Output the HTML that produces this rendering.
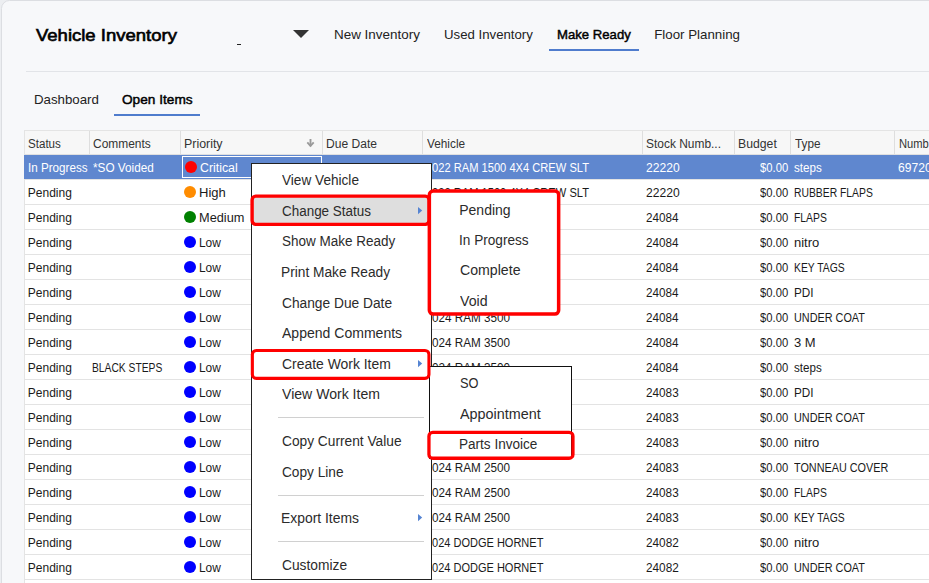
<!DOCTYPE html>
<html><head><meta charset="utf-8">
<style>
html,body{margin:0;padding:0;}
body{width:929px;height:583px;overflow:hidden;position:relative;background:#eceef1;font-family:"Liberation Sans",sans-serif;}
.t{position:absolute;white-space:nowrap;line-height:20px;}
.card{position:absolute;left:1px;top:0px;width:1000px;height:700px;border:1px solid #dcdee2;border-radius:8.5px;background:#f7f8fa;box-sizing:border-box;}
.ln{position:absolute;}
</style></head><body>
<div class="card"></div>

<div class="t" style="left:36.41px;top:24.97px;font-size:17.4px;color:#000;transform:scaleX(1.0637);transform-origin:0 0;-webkit-text-stroke:0.65px #000;">Vehicle Inventory</div>
<div class="ln" style="left:237px;top:44px;width:4px;height:1px;background:#222"></div>
<svg style="position:absolute;left:293px;top:30px" width="16" height="8"><path d="M0 0H16L8 8Z" fill="#333"/></svg>
<div class="t" style="left:334.49px;top:24.59px;font-size:13.3px;color:#222;transform:scaleX(1.0109);transform-origin:0 0;">New Inventory</div>
<div class="t" style="left:444.18px;top:24.59px;font-size:13.3px;color:#222;transform:scaleX(0.9935);transform-origin:0 0;">Used Inventory</div>
<div class="t" style="left:556.72px;top:24.59px;font-size:13.3px;color:#000;transform:scaleX(0.9885);transform-origin:0 0;-webkit-text-stroke:0.45px #000;">Make Ready</div>
<div class="t" style="left:654.20px;top:24.59px;font-size:13.3px;color:#222;">Floor Planning</div>
<div class="ln" style="left:549px;top:49px;width:90px;height:2px;background:#4f7ccd"></div>
<div class="ln" style="left:26px;top:71px;width:903px;height:1px;background:#e2e4e8"></div>
<div class="t" style="left:33.50px;top:90.46px;font-size:13.1px;color:#222;transform:scaleX(1.0135);transform-origin:0 0;">Dashboard</div>
<div class="t" style="left:121.95px;top:89.69px;font-size:13.3px;color:#000;transform:scaleX(1.0271);transform-origin:0 0;-webkit-text-stroke:0.45px #000;">Open Items</div>
<div class="ln" style="left:114px;top:114px;width:86px;height:2px;background:#4f7ccd"></div>
<div class="ln" style="left:24px;top:130px;width:905px;height:24px;background:#f7f7f7;border-top:1px solid #e4e4e4;box-sizing:border-box"></div>
<div class="ln" style="left:24px;top:154px;width:905px;height:1px;background:#e0e0e0"></div>
<div class="ln" style="left:24px;top:155px;width:905px;height:428px;background:#ffffff"></div>
<div class="ln" style="left:24px;top:130px;width:1px;height:453px;background:#e4e4e4"></div>
<div class="ln" style="left:89px;top:131px;width:1px;height:23px;background:#dedede"></div>
<div class="ln" style="left:180px;top:131px;width:1px;height:23px;background:#dedede"></div>
<div class="ln" style="left:322px;top:131px;width:1px;height:23px;background:#dedede"></div>
<div class="ln" style="left:422px;top:131px;width:1px;height:23px;background:#dedede"></div>
<div class="ln" style="left:642px;top:131px;width:1px;height:23px;background:#dedede"></div>
<div class="ln" style="left:734px;top:131px;width:1px;height:23px;background:#dedede"></div>
<div class="ln" style="left:790px;top:131px;width:1px;height:23px;background:#dedede"></div>
<div class="ln" style="left:894px;top:131px;width:1px;height:23px;background:#dedede"></div>
<div class="t" style="left:28.38px;top:133.54px;font-size:12px;color:#333;transform:scaleX(0.9649);transform-origin:0 0;">Status</div>
<div class="t" style="left:93.40px;top:133.54px;font-size:12px;color:#333;transform:scaleX(0.9965);transform-origin:0 0;">Comments</div>
<div class="t" style="left:184.18px;top:133.54px;font-size:12px;color:#333;transform:scaleX(1.0322);transform-origin:0 0;">Priority</div>
<div class="t" style="left:325.91px;top:133.54px;font-size:12px;color:#333;transform:scaleX(1.0047);transform-origin:0 0;">Due Date</div>
<div class="t" style="left:426.74px;top:133.54px;font-size:12px;color:#333;transform:scaleX(0.9843);transform-origin:0 0;">Vehicle</div>
<div class="t" style="left:646.46px;top:133.54px;font-size:12px;color:#333;transform:scaleX(0.9954);transform-origin:0 0;">Stock Numb...</div>
<div class="t" style="left:737.79px;top:133.54px;font-size:12px;color:#333;transform:scaleX(1.0200);transform-origin:0 0;">Budget</div>
<div class="t" style="left:794.54px;top:133.54px;font-size:12px;color:#333;transform:scaleX(0.9790);transform-origin:0 0;">Type</div>
<div class="t" style="left:898.68px;top:133.54px;font-size:12px;color:#333;transform:scaleX(0.9300);transform-origin:0 0;">Numb</div>
<svg style="position:absolute;left:306px;top:138px" width="9" height="10"><path d="M4.5 1V8.2" stroke="#9a9a9a" stroke-width="1.9" fill="none"/><path d="M1.3 4.4L4.5 7.9L7.7 4.4" stroke="#9a9a9a" stroke-width="1.8" fill="none" stroke-linejoin="miter"/></svg>
<div class="ln" style="left:24px;top:155px;width:905px;height:24px;background:#5f87cf"></div>
<div class="ln" style="left:182px;top:156px;width:140px;height:22px;border:1px solid #fff;box-sizing:border-box"></div>
<div class="ln" style="left:25px;top:179px;width:904px;height:1px;background:#e3e3e3"></div>
<div class="t" style="left:27.72px;top:157.84px;font-size:12px;color:#fff;transform:scaleX(0.9712);transform-origin:0 0;">In Progress</div>
<div class="t" style="left:93.09px;top:157.84px;font-size:12px;color:#fff;transform:scaleX(0.9807);transform-origin:0 0;">*SO Voided</div>
<div class="ln" style="left:185px;top:161px;width:12px;height:12px;border-radius:50%;background:#ff0000"></div>
<div class="t" style="left:200.18px;top:157.84px;font-size:12px;color:#fff;transform:scaleX(1.0270);transform-origin:0 0;">Critical</div>
<div class="t" style="left:432.25px;top:157.84px;font-size:12px;color:#fff;transform:scaleX(0.9280);transform-origin:0 0;">022 RAM 1500 4X4 CREW SLT</div>
<div class="t" style="left:645.89px;top:157.84px;font-size:12px;color:#fff;transform:scaleX(1.0090);transform-origin:0 0;">22220</div>
<div class="t" style="left:759.99px;top:157.84px;font-size:12px;color:#fff;transform:scaleX(0.9369);transform-origin:0 0;">$0.00</div>
<div class="t" style="left:794.28px;top:157.84px;font-size:12px;color:#fff;transform:scaleX(0.9667);transform-origin:0 0;">steps</div>
<div class="t" style="left:897.79px;top:157.84px;font-size:12px;color:#fff;transform:scaleX(1.0090);transform-origin:0 0;">69720</div>
<div class="ln" style="left:25px;top:204px;width:904px;height:1px;background:#e3e3e3"></div>
<div class="t" style="left:27.81px;top:182.84px;font-size:12px;color:#1a1a1a;">Pending</div>
<div class="ln" style="left:184px;top:186px;width:12px;height:12px;border-radius:50%;background:#ff8c00"></div>
<div class="t" style="left:199.32px;top:182.84px;font-size:12px;color:#1a1a1a;transform:scaleX(1.0864);transform-origin:0 0;">High</div>
<div class="t" style="left:432.25px;top:182.84px;font-size:12px;color:#1a1a1a;transform:scaleX(0.9280);transform-origin:0 0;">022 RAM 1500 4X4 CREW SLT</div>
<div class="t" style="left:645.89px;top:182.84px;font-size:12px;color:#1a1a1a;transform:scaleX(1.0090);transform-origin:0 0;">22220</div>
<div class="t" style="left:759.99px;top:182.84px;font-size:12px;color:#1a1a1a;transform:scaleX(0.9369);transform-origin:0 0;">$0.00</div>
<div class="t" style="left:793.75px;top:182.84px;font-size:12px;color:#1a1a1a;transform:scaleX(0.8625);transform-origin:0 0;">RUBBER FLAPS</div>
<div class="ln" style="left:25px;top:229px;width:904px;height:1px;background:#e3e3e3"></div>
<div class="t" style="left:27.81px;top:207.84px;font-size:12px;color:#1a1a1a;">Pending</div>
<div class="ln" style="left:184px;top:211px;width:12px;height:12px;border-radius:50%;background:#008000"></div>
<div class="t" style="left:199.35px;top:207.84px;font-size:12px;color:#1a1a1a;transform:scaleX(1.0638);transform-origin:0 0;">Medium</div>
<div class="t" style="left:432.23px;top:207.84px;font-size:12px;color:#1a1a1a;transform:scaleX(0.9746);transform-origin:0 0;">024 RAM 3500</div>
<div class="t" style="left:645.92px;top:207.84px;font-size:12px;color:#1a1a1a;transform:scaleX(0.9744);transform-origin:0 0;">24084</div>
<div class="t" style="left:759.99px;top:207.84px;font-size:12px;color:#1a1a1a;transform:scaleX(0.9369);transform-origin:0 0;">$0.00</div>
<div class="t" style="left:793.75px;top:207.84px;font-size:12px;color:#1a1a1a;transform:scaleX(0.8635);transform-origin:0 0;">FLAPS</div>
<div class="ln" style="left:25px;top:254px;width:904px;height:1px;background:#e3e3e3"></div>
<div class="t" style="left:27.81px;top:232.84px;font-size:12px;color:#1a1a1a;">Pending</div>
<div class="ln" style="left:184px;top:236px;width:12px;height:12px;border-radius:50%;background:#0000ff"></div>
<div class="t" style="left:199.42px;top:232.84px;font-size:12px;color:#1a1a1a;transform:scaleX(0.9924);transform-origin:0 0;">Low</div>
<div class="t" style="left:432.23px;top:232.84px;font-size:12px;color:#1a1a1a;transform:scaleX(0.9746);transform-origin:0 0;">024 RAM 3500</div>
<div class="t" style="left:645.92px;top:232.84px;font-size:12px;color:#1a1a1a;transform:scaleX(0.9744);transform-origin:0 0;">24084</div>
<div class="t" style="left:759.99px;top:232.84px;font-size:12px;color:#1a1a1a;transform:scaleX(0.9369);transform-origin:0 0;">$0.00</div>
<div class="t" style="left:793.72px;top:232.84px;font-size:12px;color:#1a1a1a;transform:scaleX(1.0839);transform-origin:0 0;">nitro</div>
<div class="ln" style="left:25px;top:279px;width:904px;height:1px;background:#e3e3e3"></div>
<div class="t" style="left:27.81px;top:257.84px;font-size:12px;color:#1a1a1a;">Pending</div>
<div class="ln" style="left:184px;top:261px;width:12px;height:12px;border-radius:50%;background:#0000ff"></div>
<div class="t" style="left:199.42px;top:257.84px;font-size:12px;color:#1a1a1a;transform:scaleX(0.9924);transform-origin:0 0;">Low</div>
<div class="t" style="left:432.23px;top:257.84px;font-size:12px;color:#1a1a1a;transform:scaleX(0.9746);transform-origin:0 0;">024 RAM 3500</div>
<div class="t" style="left:645.92px;top:257.84px;font-size:12px;color:#1a1a1a;transform:scaleX(0.9744);transform-origin:0 0;">24084</div>
<div class="t" style="left:759.99px;top:257.84px;font-size:12px;color:#1a1a1a;transform:scaleX(0.9369);transform-origin:0 0;">$0.00</div>
<div class="t" style="left:793.74px;top:257.84px;font-size:12px;color:#1a1a1a;transform:scaleX(0.8639);transform-origin:0 0;">KEY TAGS</div>
<div class="ln" style="left:25px;top:304px;width:904px;height:1px;background:#e3e3e3"></div>
<div class="t" style="left:27.81px;top:282.84px;font-size:12px;color:#1a1a1a;">Pending</div>
<div class="ln" style="left:184px;top:286px;width:12px;height:12px;border-radius:50%;background:#0000ff"></div>
<div class="t" style="left:199.42px;top:282.84px;font-size:12px;color:#1a1a1a;transform:scaleX(0.9924);transform-origin:0 0;">Low</div>
<div class="t" style="left:432.23px;top:282.84px;font-size:12px;color:#1a1a1a;transform:scaleX(0.9746);transform-origin:0 0;">024 RAM 3500</div>
<div class="t" style="left:645.92px;top:282.84px;font-size:12px;color:#1a1a1a;transform:scaleX(0.9744);transform-origin:0 0;">24084</div>
<div class="t" style="left:759.99px;top:282.84px;font-size:12px;color:#1a1a1a;transform:scaleX(0.9369);transform-origin:0 0;">$0.00</div>
<div class="t" style="left:793.63px;top:282.84px;font-size:12px;color:#1a1a1a;transform:scaleX(0.9771);transform-origin:0 0;">PDI</div>
<div class="ln" style="left:25px;top:329px;width:904px;height:1px;background:#e3e3e3"></div>
<div class="t" style="left:27.81px;top:307.84px;font-size:12px;color:#1a1a1a;">Pending</div>
<div class="ln" style="left:184px;top:311px;width:12px;height:12px;border-radius:50%;background:#0000ff"></div>
<div class="t" style="left:199.42px;top:307.84px;font-size:12px;color:#1a1a1a;transform:scaleX(0.9924);transform-origin:0 0;">Low</div>
<div class="t" style="left:432.23px;top:307.84px;font-size:12px;color:#1a1a1a;transform:scaleX(0.9746);transform-origin:0 0;">024 RAM 3500</div>
<div class="t" style="left:645.92px;top:307.84px;font-size:12px;color:#1a1a1a;transform:scaleX(0.9744);transform-origin:0 0;">24084</div>
<div class="t" style="left:759.99px;top:307.84px;font-size:12px;color:#1a1a1a;transform:scaleX(0.9369);transform-origin:0 0;">$0.00</div>
<div class="t" style="left:793.76px;top:307.84px;font-size:12px;color:#1a1a1a;transform:scaleX(0.9036);transform-origin:0 0;">UNDER COAT</div>
<div class="ln" style="left:25px;top:354px;width:904px;height:1px;background:#e3e3e3"></div>
<div class="t" style="left:27.81px;top:332.84px;font-size:12px;color:#1a1a1a;">Pending</div>
<div class="ln" style="left:184px;top:336px;width:12px;height:12px;border-radius:50%;background:#0000ff"></div>
<div class="t" style="left:199.42px;top:332.84px;font-size:12px;color:#1a1a1a;transform:scaleX(0.9924);transform-origin:0 0;">Low</div>
<div class="t" style="left:432.23px;top:332.84px;font-size:12px;color:#1a1a1a;transform:scaleX(0.9746);transform-origin:0 0;">024 RAM 3500</div>
<div class="t" style="left:645.92px;top:332.84px;font-size:12px;color:#1a1a1a;transform:scaleX(0.9744);transform-origin:0 0;">24084</div>
<div class="t" style="left:759.99px;top:332.84px;font-size:12px;color:#1a1a1a;transform:scaleX(0.9369);transform-origin:0 0;">$0.00</div>
<div class="t" style="left:794.11px;top:332.84px;font-size:12px;color:#1a1a1a;transform:scaleX(1.0824);transform-origin:0 0;">3 M</div>
<div class="ln" style="left:25px;top:379px;width:904px;height:1px;background:#e3e3e3"></div>
<div class="t" style="left:27.81px;top:357.84px;font-size:12px;color:#1a1a1a;">Pending</div>
<div class="t" style="left:92.45px;top:357.84px;font-size:12px;color:#1a1a1a;transform:scaleX(0.8569);transform-origin:0 0;">BLACK STEPS</div>
<div class="ln" style="left:184px;top:361px;width:12px;height:12px;border-radius:50%;background:#0000ff"></div>
<div class="t" style="left:199.42px;top:357.84px;font-size:12px;color:#1a1a1a;transform:scaleX(0.9924);transform-origin:0 0;">Low</div>
<div class="t" style="left:432.23px;top:357.84px;font-size:12px;color:#1a1a1a;transform:scaleX(0.9746);transform-origin:0 0;">024 RAM 3500</div>
<div class="t" style="left:645.92px;top:357.84px;font-size:12px;color:#1a1a1a;transform:scaleX(0.9744);transform-origin:0 0;">24084</div>
<div class="t" style="left:759.99px;top:357.84px;font-size:12px;color:#1a1a1a;transform:scaleX(0.9369);transform-origin:0 0;">$0.00</div>
<div class="t" style="left:794.28px;top:357.84px;font-size:12px;color:#1a1a1a;transform:scaleX(0.9667);transform-origin:0 0;">steps</div>
<div class="ln" style="left:25px;top:404px;width:904px;height:1px;background:#e3e3e3"></div>
<div class="t" style="left:27.81px;top:382.84px;font-size:12px;color:#1a1a1a;">Pending</div>
<div class="ln" style="left:184px;top:386px;width:12px;height:12px;border-radius:50%;background:#0000ff"></div>
<div class="t" style="left:199.42px;top:382.84px;font-size:12px;color:#1a1a1a;transform:scaleX(0.9924);transform-origin:0 0;">Low</div>
<div class="t" style="left:432.23px;top:382.84px;font-size:12px;color:#1a1a1a;transform:scaleX(0.9746);transform-origin:0 0;">024 RAM 2500</div>
<div class="t" style="left:645.91px;top:382.84px;font-size:12px;color:#1a1a1a;transform:scaleX(0.9798);transform-origin:0 0;">24083</div>
<div class="t" style="left:759.99px;top:382.84px;font-size:12px;color:#1a1a1a;transform:scaleX(0.9369);transform-origin:0 0;">$0.00</div>
<div class="t" style="left:793.63px;top:382.84px;font-size:12px;color:#1a1a1a;transform:scaleX(0.9771);transform-origin:0 0;">PDI</div>
<div class="ln" style="left:25px;top:429px;width:904px;height:1px;background:#e3e3e3"></div>
<div class="t" style="left:27.81px;top:407.84px;font-size:12px;color:#1a1a1a;">Pending</div>
<div class="ln" style="left:184px;top:411px;width:12px;height:12px;border-radius:50%;background:#0000ff"></div>
<div class="t" style="left:199.42px;top:407.84px;font-size:12px;color:#1a1a1a;transform:scaleX(0.9924);transform-origin:0 0;">Low</div>
<div class="t" style="left:432.23px;top:407.84px;font-size:12px;color:#1a1a1a;transform:scaleX(0.9746);transform-origin:0 0;">024 RAM 2500</div>
<div class="t" style="left:645.91px;top:407.84px;font-size:12px;color:#1a1a1a;transform:scaleX(0.9798);transform-origin:0 0;">24083</div>
<div class="t" style="left:759.99px;top:407.84px;font-size:12px;color:#1a1a1a;transform:scaleX(0.9369);transform-origin:0 0;">$0.00</div>
<div class="t" style="left:793.76px;top:407.84px;font-size:12px;color:#1a1a1a;transform:scaleX(0.9036);transform-origin:0 0;">UNDER COAT</div>
<div class="ln" style="left:25px;top:454px;width:904px;height:1px;background:#e3e3e3"></div>
<div class="t" style="left:27.81px;top:432.84px;font-size:12px;color:#1a1a1a;">Pending</div>
<div class="ln" style="left:184px;top:436px;width:12px;height:12px;border-radius:50%;background:#0000ff"></div>
<div class="t" style="left:199.42px;top:432.84px;font-size:12px;color:#1a1a1a;transform:scaleX(0.9924);transform-origin:0 0;">Low</div>
<div class="t" style="left:432.23px;top:432.84px;font-size:12px;color:#1a1a1a;transform:scaleX(0.9746);transform-origin:0 0;">024 RAM 2500</div>
<div class="t" style="left:645.91px;top:432.84px;font-size:12px;color:#1a1a1a;transform:scaleX(0.9798);transform-origin:0 0;">24083</div>
<div class="t" style="left:759.99px;top:432.84px;font-size:12px;color:#1a1a1a;transform:scaleX(0.9369);transform-origin:0 0;">$0.00</div>
<div class="t" style="left:793.72px;top:432.84px;font-size:12px;color:#1a1a1a;transform:scaleX(1.0839);transform-origin:0 0;">nitro</div>
<div class="ln" style="left:25px;top:479px;width:904px;height:1px;background:#e3e3e3"></div>
<div class="t" style="left:27.81px;top:457.84px;font-size:12px;color:#1a1a1a;">Pending</div>
<div class="ln" style="left:184px;top:461px;width:12px;height:12px;border-radius:50%;background:#0000ff"></div>
<div class="t" style="left:199.42px;top:457.84px;font-size:12px;color:#1a1a1a;transform:scaleX(0.9924);transform-origin:0 0;">Low</div>
<div class="t" style="left:432.23px;top:457.84px;font-size:12px;color:#1a1a1a;transform:scaleX(0.9746);transform-origin:0 0;">024 RAM 2500</div>
<div class="t" style="left:645.91px;top:457.84px;font-size:12px;color:#1a1a1a;transform:scaleX(0.9798);transform-origin:0 0;">24083</div>
<div class="t" style="left:759.99px;top:457.84px;font-size:12px;color:#1a1a1a;transform:scaleX(0.9369);transform-origin:0 0;">$0.00</div>
<div class="t" style="left:794.36px;top:457.84px;font-size:12px;color:#1a1a1a;transform:scaleX(0.9023);transform-origin:0 0;">TONNEAU COVER</div>
<div class="ln" style="left:25px;top:504px;width:904px;height:1px;background:#e3e3e3"></div>
<div class="t" style="left:27.81px;top:482.84px;font-size:12px;color:#1a1a1a;">Pending</div>
<div class="ln" style="left:184px;top:486px;width:12px;height:12px;border-radius:50%;background:#0000ff"></div>
<div class="t" style="left:199.42px;top:482.84px;font-size:12px;color:#1a1a1a;transform:scaleX(0.9924);transform-origin:0 0;">Low</div>
<div class="t" style="left:432.23px;top:482.84px;font-size:12px;color:#1a1a1a;transform:scaleX(0.9746);transform-origin:0 0;">024 RAM 2500</div>
<div class="t" style="left:645.91px;top:482.84px;font-size:12px;color:#1a1a1a;transform:scaleX(0.9798);transform-origin:0 0;">24083</div>
<div class="t" style="left:759.99px;top:482.84px;font-size:12px;color:#1a1a1a;transform:scaleX(0.9369);transform-origin:0 0;">$0.00</div>
<div class="t" style="left:793.75px;top:482.84px;font-size:12px;color:#1a1a1a;transform:scaleX(0.8635);transform-origin:0 0;">FLAPS</div>
<div class="ln" style="left:25px;top:529px;width:904px;height:1px;background:#e3e3e3"></div>
<div class="t" style="left:27.81px;top:507.84px;font-size:12px;color:#1a1a1a;">Pending</div>
<div class="ln" style="left:184px;top:511px;width:12px;height:12px;border-radius:50%;background:#0000ff"></div>
<div class="t" style="left:199.42px;top:507.84px;font-size:12px;color:#1a1a1a;transform:scaleX(0.9924);transform-origin:0 0;">Low</div>
<div class="t" style="left:432.23px;top:507.84px;font-size:12px;color:#1a1a1a;transform:scaleX(0.9746);transform-origin:0 0;">024 RAM 2500</div>
<div class="t" style="left:645.91px;top:507.84px;font-size:12px;color:#1a1a1a;transform:scaleX(0.9798);transform-origin:0 0;">24083</div>
<div class="t" style="left:759.99px;top:507.84px;font-size:12px;color:#1a1a1a;transform:scaleX(0.9369);transform-origin:0 0;">$0.00</div>
<div class="t" style="left:793.74px;top:507.84px;font-size:12px;color:#1a1a1a;transform:scaleX(0.8639);transform-origin:0 0;">KEY TAGS</div>
<div class="ln" style="left:25px;top:554px;width:904px;height:1px;background:#e3e3e3"></div>
<div class="t" style="left:27.81px;top:532.84px;font-size:12px;color:#1a1a1a;">Pending</div>
<div class="ln" style="left:184px;top:536px;width:12px;height:12px;border-radius:50%;background:#0000ff"></div>
<div class="t" style="left:199.42px;top:532.84px;font-size:12px;color:#1a1a1a;transform:scaleX(0.9924);transform-origin:0 0;">Low</div>
<div class="t" style="left:432.26px;top:532.84px;font-size:12px;color:#1a1a1a;transform:scaleX(0.9179);transform-origin:0 0;">024 DODGE HORNET</div>
<div class="t" style="left:645.91px;top:532.84px;font-size:12px;color:#1a1a1a;transform:scaleX(0.9826);transform-origin:0 0;">24082</div>
<div class="t" style="left:759.99px;top:532.84px;font-size:12px;color:#1a1a1a;transform:scaleX(0.9369);transform-origin:0 0;">$0.00</div>
<div class="t" style="left:793.72px;top:532.84px;font-size:12px;color:#1a1a1a;transform:scaleX(1.0839);transform-origin:0 0;">nitro</div>
<div class="ln" style="left:25px;top:579px;width:904px;height:1px;background:#e3e3e3"></div>
<div class="t" style="left:27.81px;top:557.84px;font-size:12px;color:#1a1a1a;">Pending</div>
<div class="ln" style="left:184px;top:561px;width:12px;height:12px;border-radius:50%;background:#0000ff"></div>
<div class="t" style="left:199.42px;top:557.84px;font-size:12px;color:#1a1a1a;transform:scaleX(0.9924);transform-origin:0 0;">Low</div>
<div class="t" style="left:432.26px;top:557.84px;font-size:12px;color:#1a1a1a;transform:scaleX(0.9179);transform-origin:0 0;">024 DODGE HORNET</div>
<div class="t" style="left:645.91px;top:557.84px;font-size:12px;color:#1a1a1a;transform:scaleX(0.9826);transform-origin:0 0;">24082</div>
<div class="t" style="left:759.99px;top:557.84px;font-size:12px;color:#1a1a1a;transform:scaleX(0.9369);transform-origin:0 0;">$0.00</div>
<div class="t" style="left:793.76px;top:557.84px;font-size:12px;color:#1a1a1a;transform:scaleX(0.9036);transform-origin:0 0;">UNDER COAT</div>
<div class="ln" style="left:251px;top:163px;width:181px;height:417px;background:#fff;border:1px solid #222;box-sizing:border-box"></div>
<div class="ln" style="left:252px;top:196px;width:177px;height:29px;background:#dedede"></div>
<div class="t" style="left:282.23px;top:170.15px;font-size:14px;color:#2b2b2b;transform:scaleX(0.9728);transform-origin:0 0;">View Vehicle</div>
<div class="t" style="left:281.63px;top:200.95px;font-size:14px;color:#2b2b2b;transform:scaleX(0.9604);transform-origin:0 0;">Change Status</div>
<svg style="position:absolute;left:418px;top:206.5px" width="5" height="8"><path d="M0 0L4.2 3.6L0 7.2Z" fill="#5584d2"/></svg>
<div class="t" style="left:281.69px;top:231.15px;font-size:14px;color:#2b2b2b;transform:scaleX(0.9629);transform-origin:0 0;">Show Make Ready</div>
<div class="t" style="left:281.17px;top:262.15px;font-size:14px;color:#2b2b2b;transform:scaleX(0.9802);transform-origin:0 0;">Print Make Ready</div>
<div class="t" style="left:281.61px;top:292.95px;font-size:14px;color:#2b2b2b;transform:scaleX(0.9822);transform-origin:0 0;">Change Due Date</div>
<div class="t" style="left:282.26px;top:323.35px;font-size:14px;color:#2b2b2b;transform:scaleX(1.0024);transform-origin:0 0;">Append Comments</div>
<div class="t" style="left:281.60px;top:354.15px;font-size:14px;color:#2b2b2b;transform:scaleX(0.9941);transform-origin:0 0;">Create Work Item</div>
<svg style="position:absolute;left:418px;top:359.7px" width="5" height="8"><path d="M0 0L4.2 3.6L0 7.2Z" fill="#5584d2"/></svg>
<div class="t" style="left:282.23px;top:384.15px;font-size:14px;color:#2b2b2b;transform:scaleX(1.0049);transform-origin:0 0;">View Work Item</div>
<div class="t" style="left:281.61px;top:431.15px;font-size:14px;color:#2b2b2b;transform:scaleX(0.9808);transform-origin:0 0;">Copy Current Value</div>
<div class="t" style="left:281.62px;top:461.65px;font-size:14px;color:#2b2b2b;transform:scaleX(0.9767);transform-origin:0 0;">Copy Line</div>
<div class="t" style="left:281.15px;top:508.15px;font-size:14px;color:#2b2b2b;transform:scaleX(0.9918);transform-origin:0 0;">Export Items</div>
<svg style="position:absolute;left:418px;top:513.7px" width="5" height="8"><path d="M0 0L4.2 3.6L0 7.2Z" fill="#5584d2"/></svg>
<div class="t" style="left:281.61px;top:554.75px;font-size:14px;color:#2b2b2b;transform:scaleX(0.9843);transform-origin:0 0;">Customize</div>
<div class="ln" style="left:278px;top:417px;width:146px;height:1px;background:#d0d0d0"></div>
<div class="ln" style="left:278px;top:495px;width:146px;height:1px;background:#d0d0d0"></div>
<div class="ln" style="left:278px;top:541px;width:146px;height:1px;background:#d0d0d0"></div>
<div class="ln" style="left:429px;top:190px;width:130px;height:124px;background:#fff"></div>
<div class="t" style="left:459.24px;top:199.65px;font-size:14px;color:#2b2b2b;">Pending</div>
<div class="t" style="left:459.14px;top:230.15px;font-size:14px;color:#2b2b2b;transform:scaleX(0.9729);transform-origin:0 0;">In Progress</div>
<div class="t" style="left:459.69px;top:260.35px;font-size:14px;color:#2b2b2b;transform:scaleX(1.0098);transform-origin:0 0;">Complete</div>
<div class="t" style="left:460.33px;top:290.85px;font-size:14px;color:#2b2b2b;transform:scaleX(1.0120);transform-origin:0 0;">Void</div>
<div class="ln" style="left:429px;top:366px;width:143px;height:93px;background:#fff;border:1px solid #111;box-sizing:border-box"></div>
<div class="t" style="left:459.92px;top:373.15px;font-size:14px;color:#2b2b2b;transform:scaleX(0.9137);transform-origin:0 0;">SO</div>
<div class="t" style="left:460.46px;top:403.75px;font-size:14px;color:#2b2b2b;transform:scaleX(1.0259);transform-origin:0 0;">Appointment</div>
<div class="t" style="left:459.38px;top:433.85px;font-size:14px;color:#2b2b2b;transform:scaleX(0.9688);transform-origin:0 0;">Parts Invoice</div>
<svg style="position:absolute;left:0;top:0" width="929" height="583"><rect x="252.10" y="196.10" width="176.95" height="28.30" rx="3.80" fill="none" stroke="#ff0000" stroke-width="3.4"/><rect x="429.35" y="191.05" width="129.30" height="123.00" rx="3.75" fill="none" stroke="#ff0000" stroke-width="3.5"/><rect x="252.35" y="350.55" width="176.60" height="27.80" rx="3.95" fill="none" stroke="#ff0000" stroke-width="3.1"/><rect x="428.95" y="432.35" width="144.00" height="25.90" rx="3.85" fill="none" stroke="#ff0000" stroke-width="3.3"/></svg>
</body></html>
